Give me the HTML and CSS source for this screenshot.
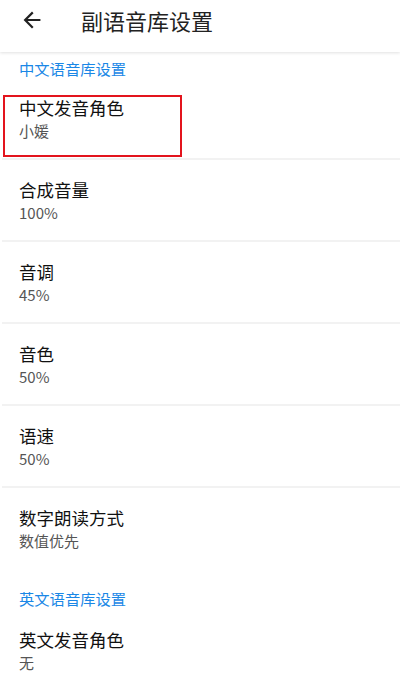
FILE: index.html
```html
<!DOCTYPE html>
<html>
<head>
  <meta charset="utf-8">
  <title>副语音库设置</title>
  <link rel="stylesheet" href="styles.css">
</head>
<body>
  <div class="topbar">
    <span class="back">
      <svg width="22" height="22" viewBox="0 0 24 24"><path d="M20 12H5M12 4.5L4.5 12L12 19.5" fill="none" stroke="#222" stroke-width="2.4" stroke-linecap="square"/></svg>
    </span>
    <h1>副语音库设置</h1>
  </div>

  <div class="list">
    <div class="section">中文语音库设置</div>
    <div class="item">
      <div class="mark"></div>
      <div class="title">中文发音角色</div>
      <div class="sub">小媛</div>
    </div>
    <div class="item">
      <div class="title">合成音量</div>
      <div class="sub">100%</div>
    </div>
    <div class="item">
      <div class="title">音调</div>
      <div class="sub">45%</div>
    </div>
    <div class="item">
      <div class="title">音色</div>
      <div class="sub">50%</div>
    </div>
    <div class="item">
      <div class="title">语速</div>
      <div class="sub">50%</div>
    </div>
    <div class="item last">
      <div class="title">数字朗读方式</div>
      <div class="sub">数值优先</div>
    </div>
    <div class="section second">英文语音库设置</div>
    <div class="item last">
      <div class="title">英文发音角色</div>
      <div class="sub">无</div>
    </div>
  </div>
</body>
</html>
```

FILE: styles.css
```css
body {
  margin: 0;
  background: #fff;
  font-family: "Noto Sans CJK SC", "Noto Sans", sans-serif;
  color: #111;
  overflow: hidden;
}
.topbar {
  height: 52px;
  display: flex;
  align-items: center;
  background: #fff;
  box-shadow: 0 1px 3px rgba(0,0,0,0.12);
  position: relative;
}
.back {
  width: 22px;
  height: 22px;
  margin-left: 21px;
  margin-top: -12px;
}
.topbar h1 {
  margin: -12px 0 0 38px;
  font-size: 22px;
  font-weight: normal;
  color: #222;
  line-height: 1;
}
.section {
  color: #1a87e6;
  font-size: 15.3px;
  line-height: 20px;
  padding: 6px 19px 0;
  height: 20px;
}
.section.second {
  padding-top: 20px;
  height: 22px;
}
.item {
  position: relative;
  height: 80px;
  margin-left: 2px;
  padding: 0 19px 0 17px;
  border-bottom: 2px solid #f2f2f2;
}
.item.last {
  border-bottom: none;
}
.title {
  font-size: 17.5px;
  line-height: 24px;
  padding-top: 18px;
}
.sub {
  font-size: 15px;
  line-height: 20px;
  color: #555;
  margin-top: 1px;
}
.mark {
  position: absolute;
  left: 1px;
  top: 17px;
  width: 175px;
  height: 58px;
  border: 2px solid #e3141d;
}
```
